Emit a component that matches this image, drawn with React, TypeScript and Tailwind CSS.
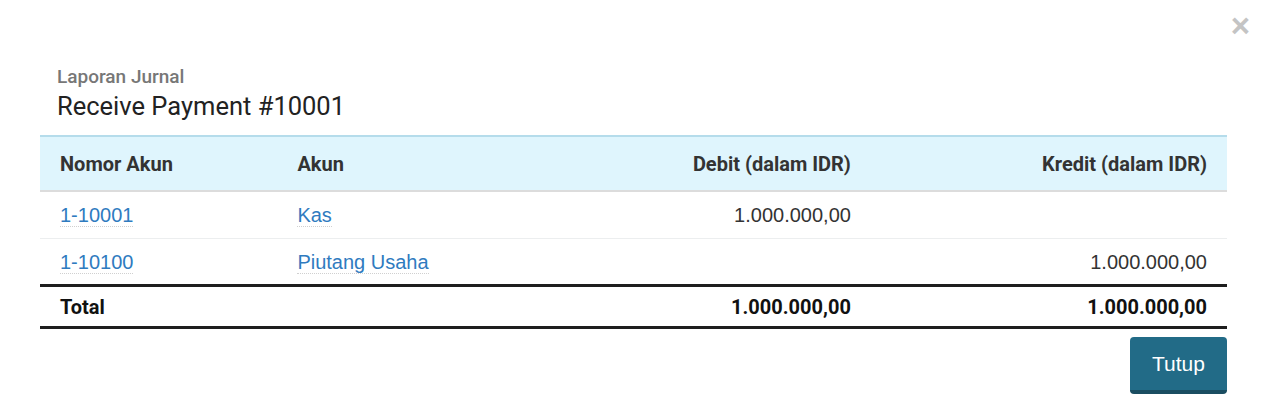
import { Fragment } from "react";

const rows = [
  { no: "1-10001", akun: "Kas", debit: "1.000.000,00", kredit: "" },
  { no: "1-10100", akun: "Piutang Usaha", debit: "", kredit: "1.000.000,00" },
];

const cols = "grid grid-cols-[20%_25%_25%_30%]";

export default function App() {
  return (
    <div className="relative h-[412px] w-full bg-white px-10 pt-[66px] font-['Roboto',sans-serif]">
      <button className="absolute right-[17px] top-[9px] font-['Liberation_Sans',sans-serif] text-[33px] font-bold leading-none text-[#c4c4c4]">
        ×
      </button>

      <div className="px-[17px]">
        <div className="text-[19px] font-medium leading-[22px] text-[#777]">Laporan Jurnal</div>
        <h1 className="mt-[2px] text-[25.5px] leading-[32px] text-[#222]">Receive Payment #10001</h1>
      </div>

      <div className="mt-[13px]">
        {/* header */}
        <div className={`${cols} h-[57px] items-center border-y-2 border-t-[#b5dceb] border-b-[#dcdcdc] bg-[#dff5fd] text-[20px] font-bold text-[#333]`}>
          <div className="px-5">Nomor Akun</div>
          <div className="px-5">Akun</div>
          <div className="px-5 text-right">Debit (dalam IDR)</div>
          <div className="px-5 text-right">Kredit (dalam IDR)</div>
        </div>

        {rows.map((r, i) => (
          <div
            key={r.no}
            className={`${cols} items-center font-['Liberation_Sans',sans-serif] text-[20px] text-[#333] ${i === 0 ? "h-[47px] border-b border-[#eceeef]" : "h-[45px]"}`}
          >
            <div className="px-5">
              <a className="border-b border-dotted border-[#d0d0d0] text-[#2f7bbf]">{r.no}</a>
            </div>
            <div className="px-5">
              <a className="border-b border-dotted border-[#d0d0d0] text-[#2f7bbf]">{r.akun}</a>
            </div>
            <div className="px-5 text-right">{r.debit}</div>
            <div className="px-5 text-right">{r.kredit}</div>
          </div>
        ))}

        {/* total */}
        <div className={`${cols} h-[45px] items-center border-y-[3px] border-[#1e1e1e] text-[20px] font-bold text-[#111]`}>
          <Fragment>
            <div className="px-5">Total</div>
            <div />
            <div className="px-5 text-right">1.000.000,00</div>
            <div className="px-5 text-right">1.000.000,00</div>
          </Fragment>
        </div>
      </div>

      <div className="mt-2 flex justify-end">
        <button className="h-[57px] w-[97px] rounded-[4px] border-b-4 border-[#1a4d61] bg-[#226b87] font-['Liberation_Sans',sans-serif] text-[21px] text-white">
          Tutup
        </button>
      </div>
    </div>
  );
}
